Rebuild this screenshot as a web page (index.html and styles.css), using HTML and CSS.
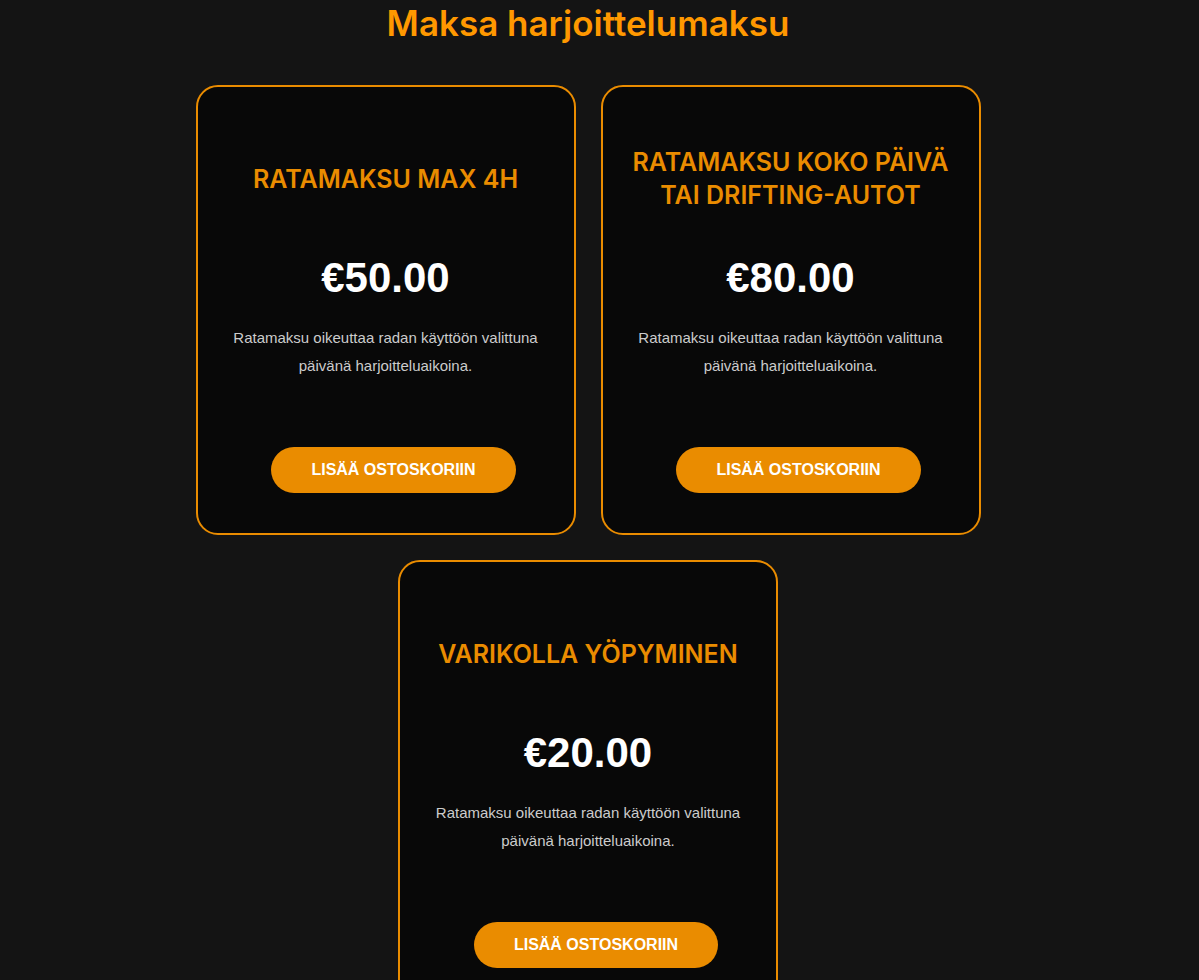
FILE: index.html
```html
<!DOCTYPE html>
<html lang="fi">
<head>
<meta charset="utf-8">
<meta name="viewport" content="width=device-width, initial-scale=1">
<title>Maksa harjoittelumaksu</title>
<link rel="stylesheet" href="styles.css">
</head>
<body>
<main class="page">
  <h1 class="page-title">Maksa harjoittelumaksu</h1>
  <div class="products">
    <article class="card">
      <h2 class="card-title">RATAMAKSU MAX 4H</h2>
      <p class="price">€50.00</p>
      <p class="description">Ratamaksu oikeuttaa radan käyttöön valittuna päivänä harjoitteluaikoina.</p>
      <button class="add-button" type="button">LISÄÄ OSTOSKORIIN</button>
    </article>
    <article class="card">
      <h2 class="card-title">RATAMAKSU KOKO PÄIVÄ TAI DRIFTING-AUTOT</h2>
      <p class="price">€80.00</p>
      <p class="description">Ratamaksu oikeuttaa radan käyttöön valittuna päivänä harjoitteluaikoina.</p>
      <button class="add-button" type="button">LISÄÄ OSTOSKORIIN</button>
    </article>
    <article class="card">
      <h2 class="card-title">VARIKOLLA YÖPYMINEN</h2>
      <p class="price">€20.00</p>
      <p class="description">Ratamaksu oikeuttaa radan käyttöön valittuna päivänä harjoitteluaikoina.</p>
      <button class="add-button" type="button">LISÄÄ OSTOSKORIIN</button>
    </article>
  </div>
</main>
</body>
</html>
```
FILE: styles.css
```css
* { box-sizing: border-box; }

body {
  margin: 0;
  background: #141414;
  color: #fff;
  font-family: "Liberation Sans", Arial, sans-serif;
}

.page {
  padding: 0 23px 40px 0;
}

.page-title {
  margin: 0 0 39px;
  color: #ff9800;
  font: 600 35px/46px Inter, sans-serif;
  text-align: center;
}

.products {
  display: flex;
  flex-wrap: wrap;
  justify-content: center;
  gap: 25px;
  max-width: 1140px;
  margin: 0 auto;
}

.card {
  display: flex;
  flex-direction: column;
  align-items: center;
  width: 380px;
  padding: 40px 24px;
  border: 2px solid #ea8c00;
  border-radius: 22px;
  background: #080808;
  text-align: center;
}

.card-title {
  display: flex;
  align-items: center;
  justify-content: center;
  min-height: 104px;
  margin: 0 0 21px;
  color: #ea8c00;
  font: 600 25px/33px Inter, sans-serif;
}

.price {
  margin: 0 0 20px;
  font-size: 42px;
  font-weight: 700;
  line-height: 52px;
}

.description {
  margin: 0 0 67px;
  color: #ccc;
  font-size: 15px;
  line-height: 28px;
}

.add-button {
  margin: 0 0 0 16px;
  padding: 12px 40px;
  border: 0;
  border-radius: 23px;
  background: #ea8c00;
  color: #fff;
  font: 700 16px/22px "Liberation Sans", Arial, sans-serif;
  cursor: pointer;
}

@media (max-width: 820px) {
  .page { padding: 0 16px 40px; }
  .card { width: 100%; max-width: 380px; }
}
```
